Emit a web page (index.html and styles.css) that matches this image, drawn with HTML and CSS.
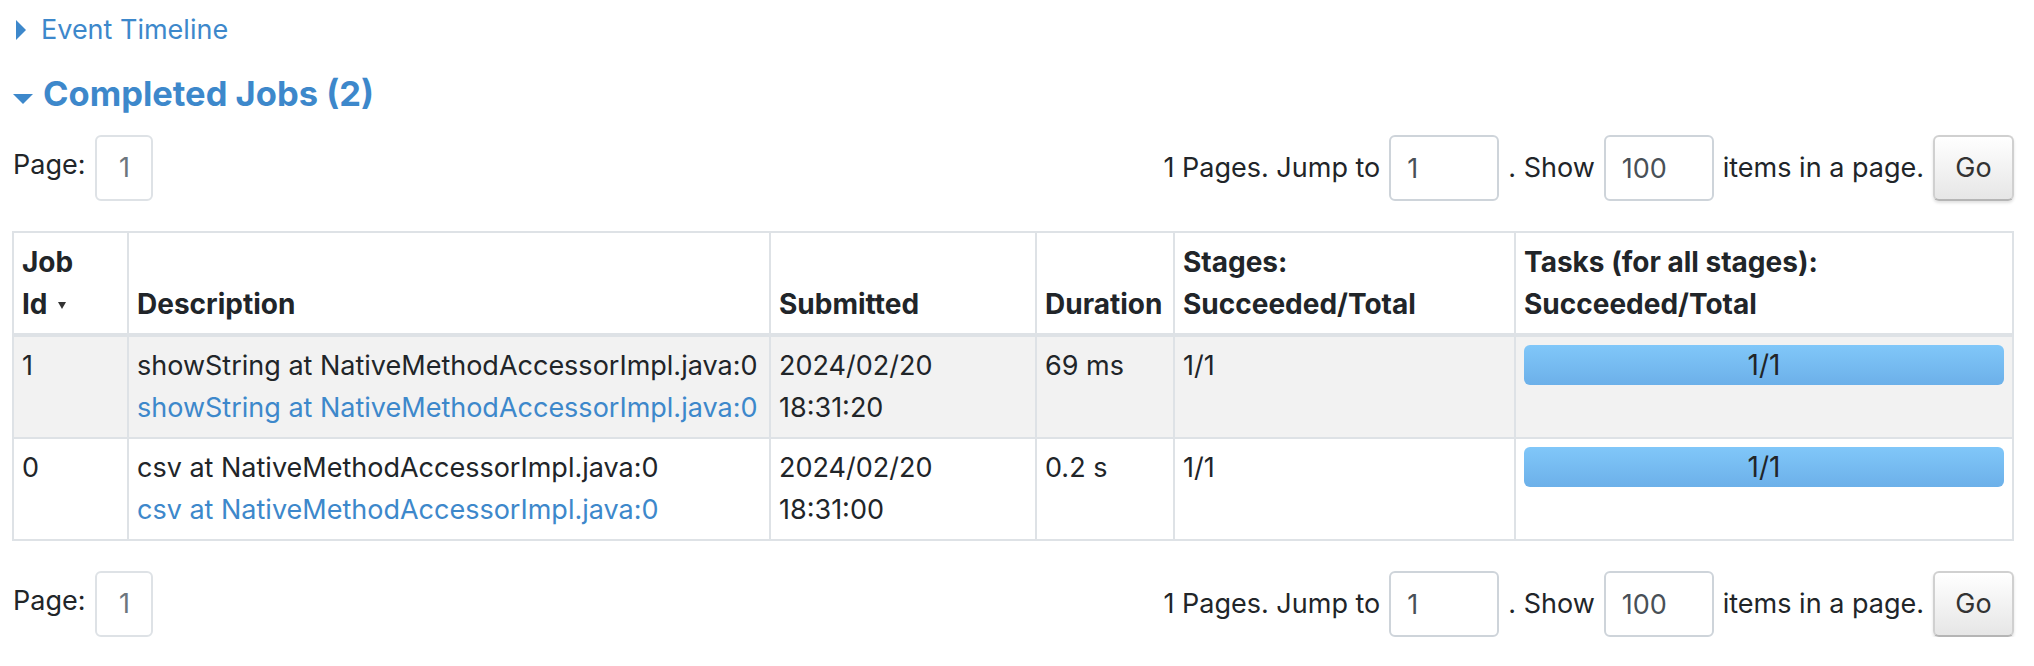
FILE: index.html
```html
<!DOCTYPE html>
<html lang="en">
<head>
<meta charset="utf-8">
<title>Spark Jobs</title>
<link rel="stylesheet" href="styles.css">
</head>
<body>
<div class="page">
  <div class="timeline-toggle">
    <span class="arrow-closed"></span>
    <a class="link" href="#">Event Timeline</a>
  </div>

  <h4 class="section-title">
    <span class="arrow-open"></span>
    <a class="link" href="#">Completed Jobs (2)</a>
  </h4>

  <div class="pager">
    <div class="pager-left">
      <span class="pager-label">Page:</span>
      <span class="page-box">1</span>
    </div>
    <div class="pager-right">
      <span>1 Pages. Jump to</span>
      <input class="pager-input" type="text" value="1">
      <span>. Show</span>
      <input class="pager-input" type="text" value="100">
      <span>items in a page.</span>
      <button class="go-btn" type="button">Go</button>
    </div>
  </div>

  <table class="jobs">
    <thead>
      <tr>
        <th class="c-id">Job<br>Id<span class="sort-arrow"></span></th>
        <th class="c-desc">Description</th>
        <th class="c-sub">Submitted</th>
        <th class="c-dur">Duration</th>
        <th class="c-stg">Stages:<br>Succeeded/Total</th>
        <th class="c-tsk">Tasks (for all stages):<br>Succeeded/Total</th>
      </tr>
    </thead>
    <tbody>
      <tr class="striped">
        <td>1</td>
        <td>
          <span class="desc-text">showString at NativeMethodAccessorImpl.java:0</span>
          <a class="link desc-link" href="#">showString at NativeMethodAccessorImpl.java:0</a>
        </td>
        <td>2024/02/20<br>18:31:20</td>
        <td>69 ms</td>
        <td>1/1</td>
        <td><div class="progress"><span class="progress-text">1/1</span></div></td>
      </tr>
      <tr>
        <td>0</td>
        <td>
          <span class="desc-text">csv at NativeMethodAccessorImpl.java:0</span>
          <a class="link desc-link" href="#">csv at NativeMethodAccessorImpl.java:0</a>
        </td>
        <td>2024/02/20<br>18:31:00</td>
        <td>0.2 s</td>
        <td>1/1</td>
        <td><div class="progress"><span class="progress-text">1/1</span></div></td>
      </tr>
    </tbody>
  </table>

  <div class="pager pager-bottom">
    <div class="pager-left">
      <span class="pager-label">Page:</span>
      <span class="page-box">1</span>
    </div>
    <div class="pager-right">
      <span>1 Pages. Jump to</span>
      <input class="pager-input" type="text" value="1">
      <span>. Show</span>
      <input class="pager-input" type="text" value="100">
      <span>items in a page.</span>
      <button class="go-btn" type="button">Go</button>
    </div>
  </div>
</div>
</body>
</html>
```

FILE: styles.css
```css
* {
  box-sizing: border-box;
}

html,
body {
  margin: 0;
  padding: 0;
  background: #ffffff;
}

body {
  font-family: Inter, "Noto Sans", "Liberation Sans", sans-serif;
  font-size: 27px;
  line-height: 42px;
  color: #212529;
}

.page {
  padding: 9px 20px 0 12px;
}

.link {
  color: #3d88cb;
  text-decoration: none;
}

/* Event timeline toggle */
.timeline-toggle {
  display: flex;
  align-items: center;
  height: 42px;
}

.arrow-closed {
  width: 0;
  height: 0;
  border-top: 10px solid transparent;
  border-bottom: 10px solid transparent;
  border-left: 10px solid #3d88cb;
  margin-left: 4px;
  margin-right: 15px;
}

/* Section heading */
.section-title {
  display: flex;
  align-items: center;
  margin: 23px 0 0 0;
  height: 40px;
  font-size: 34.5px;
  line-height: 40px;
  font-weight: 700;
}

.arrow-open {
  width: 0;
  height: 0;
  border-left: 10px solid transparent;
  border-right: 10px solid transparent;
  border-top: 10px solid #3d88cb;
  margin: 10px 10px 0 1px;
}

/* Pagination */
.pager {
  display: flex;
  justify-content: space-between;
  align-items: center;
  height: 66px;
  margin-top: 21px;
}

.pager-bottom {
  margin-top: 30px;
}

.pager-left {
  display: flex;
  align-items: center;
  gap: 10px;
}

.pager-label {
  margin-top: -6px;
  margin-left: 1px;
}

.page-box {
  display: flex;
  align-items: center;
  justify-content: center;
  width: 58px;
  height: 66px;
  border: 2px solid #dee2e6;
  border-radius: 6px;
  color: #6c757d;
}

.pager-right {
  display: flex;
  align-items: center;
  gap: 9px;
}

.pager-input {
  width: 110px;
  height: 66px;
  padding: 0 16px;
  border: 2px solid #ced4da;
  border-radius: 6px;
  font: inherit;
  color: #495057;
  background: #ffffff;
  outline: none;
}

.go-btn {
  width: 81px;
  height: 66px;
  padding: 0;
  border: 2px solid #d0d0d0;
  border-bottom-color: #b5b5b5;
  border-radius: 6px;
  background: linear-gradient(#ffffff, #e6e6e6);
  box-shadow: 0 2px 3px rgba(0, 0, 0, 0.12);
  font: inherit;
  color: #333333;
}

/* Table */
.jobs {
  width: 100%;
  margin-top: 30px;
  border-collapse: separate;
  border-spacing: 0;
  table-layout: fixed;
  border-top: 2px solid #dee2e6;
  border-left: 2px solid #dee2e6;
}

.jobs th,
.jobs td {
  padding: 8px;
  border-right: 2px solid #dee2e6;
  border-bottom: 2px solid #dee2e6;
  text-align: left;
}

.jobs th {
  vertical-align: bottom;
  font-size: 28px;
  font-weight: 700;
  white-space: nowrap;
  border-bottom-width: 4px;
}

.jobs td {
  vertical-align: top;
}

.jobs .striped td {
  background: #f2f2f2;
}

.c-id { width: 115px; }
.c-desc { width: 642px; }
.c-sub { width: 266px; }
.c-dur { width: 138px; }
.c-stg { width: 341px; }
.c-tsk { width: 498px; }

.sort-arrow {
  display: inline-block;
  width: 0;
  height: 0;
  margin-left: 10px;
  margin-bottom: 5px;
  border-left: 4px solid transparent;
  border-right: 4px solid transparent;
  border-top: 7px solid #333333;
}

.desc-text,
.desc-link {
  display: block;
  white-space: nowrap;
}

.progress {
  height: 40px;
  border-radius: 6px;
  background: linear-gradient(#80c7f9, #6cb0e9);
  text-align: center;
}

.progress-text {
  font-size: 28px;
  line-height: 40px;
  color: #212529;
}
```
